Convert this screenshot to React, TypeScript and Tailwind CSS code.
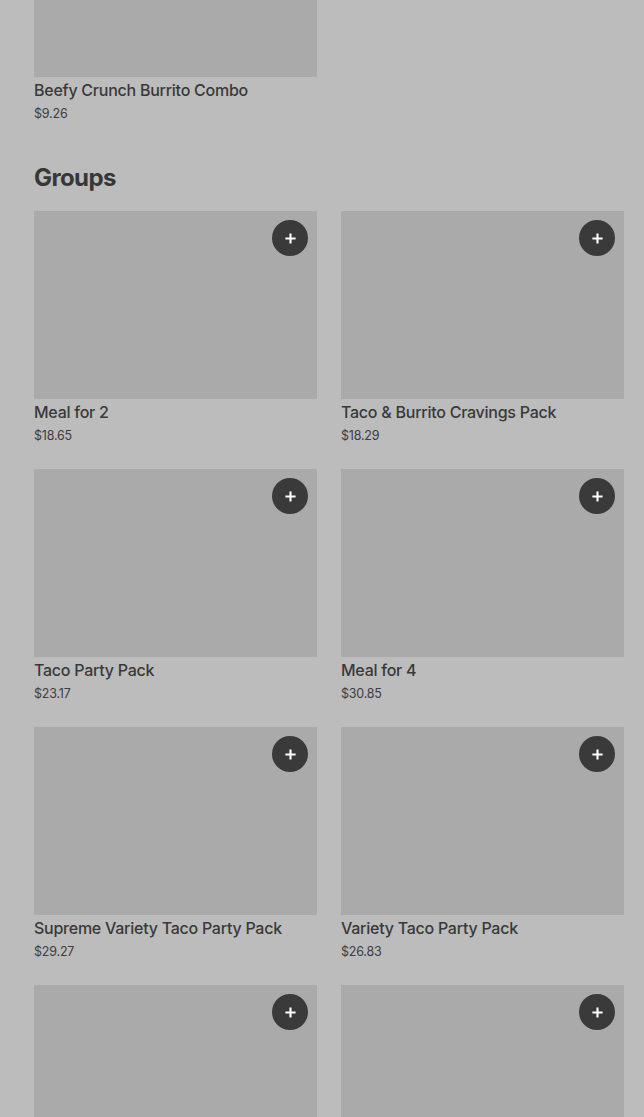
import React from "react";

type Item = { name?: string; price?: string };

const groups: Item[] = [
  { name: "Meal for 2", price: "$18.65" },
  { name: "Taco & Burrito Cravings Pack", price: "$18.29" },
  { name: "Taco Party Pack", price: "$23.17" },
  { name: "Meal for 4", price: "$30.85" },
  { name: "Supreme Variety Taco Party Pack", price: "$29.27" },
  { name: "Variety Taco Party Pack", price: "$26.83" },
  // next row is scrolled past the bottom, only the images show
  {},
  {},
];

const PlusIcon = () => (
  <svg width="13" height="13" viewBox="0 0 14 14" fill="none">
    <path d="M7 1.5v11M1.5 7h11" stroke="white" strokeWidth="2.3" />
  </svg>
);

const Card: React.FC<{ item: Item; showAdd?: boolean }> = ({ item, showAdd = true }) => (
  <div className="w-[283px] flex flex-col">
    {/* Image placeholder */}
    <div className="relative h-[188px] bg-[#aaaaaa]">
      {showAdd && (
        <button className="absolute top-[9px] right-[9px] w-9 h-9 rounded-full bg-[#3a3a3a] flex items-center justify-center">
          <PlusIcon />
        </button>
      )}
    </div>
    {item.name && (
      <p className="mt-[3px] text-base leading-5 font-medium tracking-[-0.25px] text-[#393939]">{item.name}</p>
    )}
    {item.price && (
      <p className="mt-[5px] text-[12.5px] leading-[18px] tracking-[-0.2px] text-[#3d3d3d]">{item.price}</p>
    )}
  </div>
);

export default function App() {
  return (
    <div
      className="min-h-screen bg-[#bcbcbc] overflow-hidden"
      style={{ fontFamily: "Inter, 'Liberation Sans', sans-serif" }}
    >
      <div className="px-[34px] -mt-[111px]">
        {/* Previous section (scrolled) */}
        <Card item={{ name: "Beefy Crunch Burrito Combo", price: "$9.26" }} showAdd={false} />

        {/* Groups */}
        <h2 className="mt-[39px] text-[24px] leading-8 font-bold tracking-[-0.6px] text-[#373737]">Groups</h2>
        <div className="mt-[17px] grid grid-cols-[283px_283px] gap-x-6 gap-y-[24px]">
          {groups.map((g, i) => (
            <Card key={i} item={g} />
          ))}
        </div>
      </div>
    </div>
  );
}
